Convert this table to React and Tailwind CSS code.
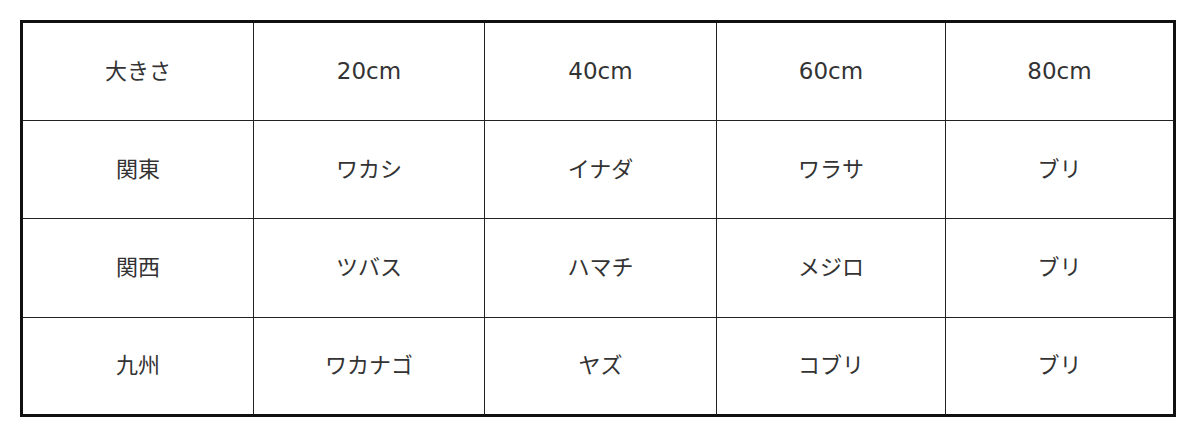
const ROWS = [
  ['大きさ', '20cm', '40cm', '60cm', '80cm'],
  ['関東', 'ワカシ', 'イナダ', 'ワラサ', 'ブリ'],
  ['関西', 'ツバス', 'ハマチ', 'メジロ', 'ブリ'],
  ['九州', 'ワカナゴ', 'ヤズ', 'コブリ', 'ブリ'],
];

export default function App() {
  return (
    <div className="bg-white w-[1200px] h-[444px] pt-[20px] pl-[20px]">
      <table
        className="w-[1156px] border-collapse border-[3px] border-[#111] text-[22px] text-[#333] table-fixed"
        style={{ fontFamily: '"DejaVu Sans", "Noto Sans CJK JP", sans-serif' }}
      >
        <colgroup>
          <col className="w-[232px]" />
          <col className="w-[231px]" />
          <col className="w-[232px]" />
          <col className="w-[229px]" />
          <col className="w-[229px]" />
        </colgroup>
        <tbody>
          {ROWS.map((row, i) => (
            <tr key={i} className="h-[98.5px]">
              {row.map((cell, j) => (
                <td
                  key={j}
                  className={`border border-[#222] text-center align-middle ${
                    i === 0 && j > 0 ? 'text-[23px]' : ''
                  }`}
                >
                  {cell}
                </td>
              ))}
            </tr>
          ))}
        </tbody>
      </table>
    </div>
  );
}
